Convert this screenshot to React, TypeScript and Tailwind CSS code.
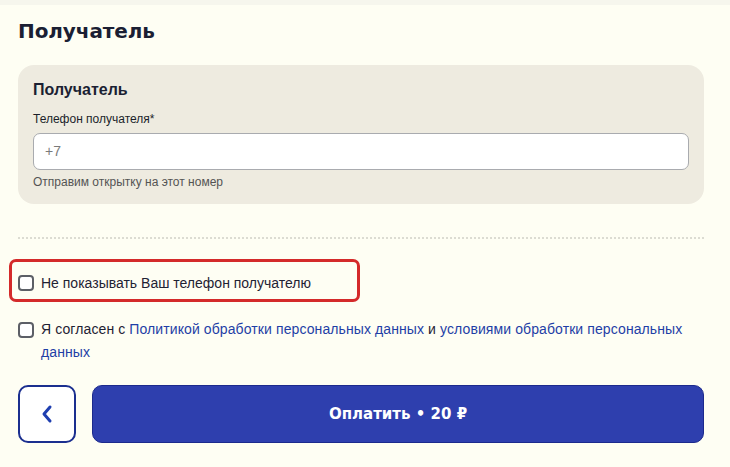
import React from "react";

export default function App() {
  const body = { fontFamily: '"Liberation Sans", Arial, sans-serif' };
  const wide = { fontFamily: '"DejaVu Sans", "Liberation Sans", sans-serif' };
  return (
    <div className="w-[730px] h-[467px] bg-[#fefef3] overflow-hidden" style={body}>
      <div className="h-[5px] bg-[#f6f6ed]" />
      <div className="pl-[18px] pr-[26px]">
        <h1 className="mt-[12px] text-[20px] leading-[28px] font-bold text-[#1b1f33] tracking-[-0.1px]" style={wide}>
          Получатель
        </h1>
        <div className="mt-[20px] rounded-[16px] bg-[#eeebe0] px-[15px] pt-[13px] pb-[14px]">
          <div className="text-[16px] leading-[24px] font-bold text-[#1b1f33]">Получатель</div>
          <div className="mt-[9px] text-[12px] leading-[16px] text-[#1b1f2a]">Телефон получателя*</div>
          <div className="mt-[6px] h-[37px] rounded-[7px] border border-[#a9abaf] bg-white flex items-center px-[11px]">
            <span className="text-[14px] text-[#7a7a7a]">+7</span>
          </div>
          <div className="mt-[4px] text-[12px] leading-[16px] text-[#545454]">Отправим открытку на этот номер</div>
        </div>
        <div className="mt-[33px] border-t-2 border-dotted border-[#dcdcd2]" />
        <div className="mt-[20px] -ml-[9px] w-[351px] h-[43px] rounded-[7px] border-[3px] border-[#d42a2a] flex items-center pl-[6px] pt-[5px]">
          <span className="w-[16px] h-[16px] rounded-[4px] border-2 border-[#5c5f66] bg-white shrink-0" />
          <span className="ml-[7px] text-[14px] text-[#1f2233]">Не показывать Ваш телефон получателю</span>
        </div>
        <div className="mt-[18px] flex items-start">
          <span className="mt-[2px] w-[16px] h-[16px] rounded-[4px] border-2 border-[#5c5f66] bg-white shrink-0" />
          <div className="ml-[7px] text-[14px] leading-[23px] text-[#1f2233] -mt-[2px] tracking-[0.1px]">
            <div className="whitespace-nowrap">
              Я согласен с <span className="text-[#1f3fa6]">Политикой обработки персональных данных</span> и{" "}
              <span className="text-[#1f3fa6]">условиями обработки персональных</span>
            </div>
            <div className="text-[#1f3fa6]">данных</div>
          </div>
        </div>
        <div className="mt-[21px] flex gap-[16px]">
          <button className="w-[58px] h-[58px] rounded-[10px] border-2 border-[#1b2f8f] bg-white flex items-center justify-center shrink-0">
            <svg width="14" height="20" viewBox="0 0 14 20" fill="none">
              <path d="M10 3 L4 10 L10 17" stroke="#1f3fb0" strokeWidth="3" strokeLinecap="round" strokeLinejoin="round" />
            </svg>
          </button>
          <button className="flex-1 h-[58px] rounded-[10px] border border-[#1c2a8c] bg-[#2e3fae] text-white text-[15px] font-bold flex items-center justify-center" style={wide}>
            Оплатить • 20 ₽
          </button>
        </div>
      </div>
    </div>
  );
}
